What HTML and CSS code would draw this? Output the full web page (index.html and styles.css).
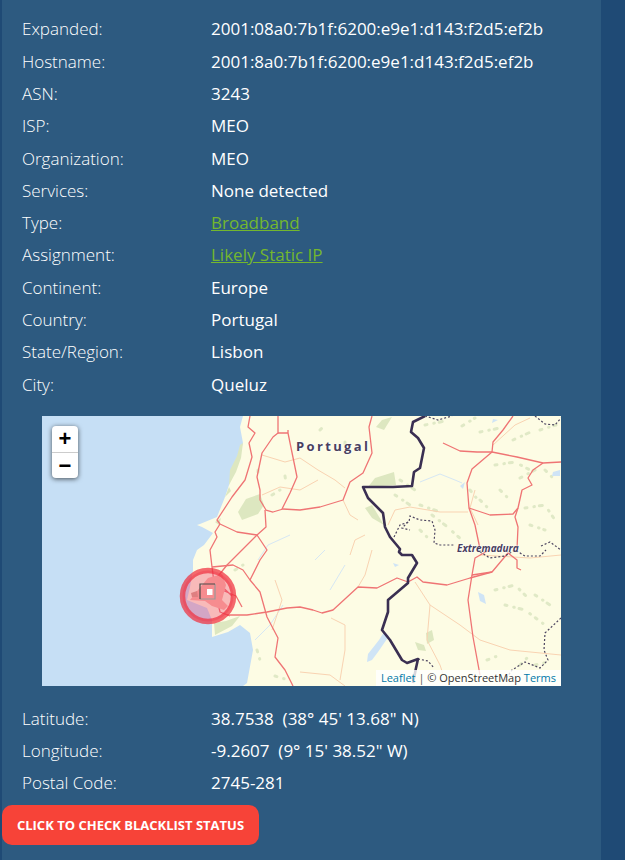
FILE: index.html
```html
<!DOCTYPE html>
<html lang="en">
<head>
<meta charset="utf-8">
<title>IP details</title>
<link rel="stylesheet" href="styles.css">
</head>
<body>
<main class="panel">
  <dl class="rows rows-top">
    <div class="row"><dt>Expanded:</dt><dd>2001:08a0:7b1f:6200:e9e1:d143:f2d5:ef2b</dd></div>
    <div class="row"><dt>Hostname:</dt><dd>2001:8a0:7b1f:6200:e9e1:d143:f2d5:ef2b</dd></div>
    <div class="row"><dt>ASN:</dt><dd>3243</dd></div>
    <div class="row"><dt>ISP:</dt><dd>MEO</dd></div>
    <div class="row"><dt>Organization:</dt><dd>MEO</dd></div>
    <div class="row"><dt>Services:</dt><dd>None detected</dd></div>
    <div class="row"><dt>Type:</dt><dd><a class="green" href="#">Broadband</a></dd></div>
    <div class="row"><dt>Assignment:</dt><dd><a class="green" href="#">Likely Static IP</a></dd></div>
    <div class="row"><dt>Continent:</dt><dd>Europe</dd></div>
    <div class="row"><dt>Country:</dt><dd>Portugal</dd></div>
    <div class="row"><dt>State/Region:</dt><dd>Lisbon</dd></div>
    <div class="row"><dt>City:</dt><dd>Queluz</dd></div>
  </dl>

  <div class="map">
    <svg class="map-art" viewBox="42 416 519 270" width="519" height="270" aria-hidden="true">
      <rect class="water" x="42" y="416" width="519" height="270"/>
      <path class="land" d="M243 416L240 427L243 443L235 467L225 497L217 517L200 524L197 525L202 527L213 533L204 545L197 550L193 560L193 570L190 587L187 600L207 608L212 620L212 637L228 632L240 625L250 633L253 650L247 683L243 686L561 686L561 416Z"/>
      <g class="green-patch">
        <path d="M240 445L243 443L241 458L236 472L229 485L230 470L237 456Z"/>
        <path d="M229 487L225 497L231 491Z"/>
        <path d="M238 512L246 499L260 494L264 505L258 514L242 520Z"/>
        <path d="M215 522L221 518L219 525Z"/>
        <path d="M214 623L226 621L240 616L232 626L215 635Z"/>
        <path d="M376 427L382 420L392 417L384 430Z"/>
        <path d="M375 478L394 472L396 485L368 487Z"/>
        <path d="M365 508L372 505L384 525L372 518Z"/>
        <path d="M426 633L432 630L434 640L427 644Z"/>
        <path d="M415 642L424 645L426 651L418 650Z"/>
      </g>
      <g class="blotch">
        <path d="M425 425L450 420M462 426L475 418M480 432L500 428M513 440L535 430M540 430L556 425"/>
        <path d="M495 465L515 462L530 470M520 478L535 470M545 470L555 480"/>
        <path d="M432 515L445 525L462 540M420 530L430 540M395 495L410 505M470 490L478 500"/>
        <path d="M400 480L415 490M420 505L440 512M480 500L490 510"/>
        <path d="M525 508L545 505L555 520M530 525L545 530M500 490L510 500"/>
        <path d="M495 590L515 585L530 600M505 605L525 610L545 625M535 595L550 605"/>
        <path d="M487 660L500 655M520 665L530 655M535 665L548 662"/>
        <path d="M257 650L260 660M275 676L288 680M272 495L280 490M258 470L258 472M285 476L286 482M235 570L243 565"/>
        <path d="M345 442L345 444M320 430L322 428M380 645L378 650"/>
      </g>
      <g class="lake">
        <path d="M379 640L384 632L389 636L378 652L372 660L367 662L368 654Z"/>
        <path d="M478 592L484 595L486 604L480 601Z"/>
        <path d="M460 486L465 482L463 489Z"/>
        <path d="M553 472L560 470L560 476L552 476Z"/>
        <path d="M393 563L399 565L395 567Z"/>
        <path d="M493 419L498 420L492 423Z"/>
      </g>
      <g class="river">
        <path d="M420 482L440 474L455 480L462 483"/>
        <path d="M258 560L268 545L290 535"/>
        <path d="M330 590L345 565M315 560L325 550"/>
        <path d="M255 640L270 625L283 605"/>
      </g>
      <g class="minor">
        <path d="M262 455L285 462L300 458L318 470L335 480L345 488"/>
        <path d="M262 495L280 487L300 490L318 480"/>
        <path d="M343 500L350 515L358 520"/>
        <path d="M395 510L410 507L440 512L468 512"/>
        <path d="M395 510L388 525"/>
        <path d="M365 535L355 540L350 555"/>
        <path d="M372 550L365 575L358 587"/>
        <path d="M331 618L345 625L345 650L340 680"/>
        <path d="M415 582L430 605L460 625L480 640L510 650L561 655"/>
        <path d="M430 605L427 640L440 665L445 680"/>
        <path d="M300 672L330 675L345 686"/>
        <path d="M475 490L470 508L478 525"/>
        <path d="M275 580L282 600L272 630"/>
        <path d="M480 555L530 558L561 555"/>
        <path d="M493 445L515 425L530 418"/>
      </g>
      <g class="road">
        <path d="M372 416L369 427L372 453L363 473L350 482L343 500L320 507L300 510L283 509L273 512L266 510L260 500L260 490L257 477L262 453L273 437L278 433L278 416"/>
        <path d="M288 430L288 433L278 433M288 433L297 477L290 493L282 509"/>
        <path d="M250 416L248 427L255 433L249 443L252 457L245 480L232 497L217 520L220 524L237 532L257 535L242 550L227 565L215 580"/>
        <path d="M265 510L266 527L257 535L267 550L260 560L250 580"/>
        <path d="M220 524L215 532L217 537L210 550L212 567L215 590L220 612L230 616"/>
        <path d="M212 567L233 565L243 570L250 580L260 592L267 617L278 638L275 657L285 670L293 686"/>
        <path d="M227 615L247 615L267 612L287 608L300 607L313 610L322 613L333 610L358 587L377 588L397 578L408 582L417 577L423 582L447 585L470 578L492 572L508 553L517 560L517 568L521 570"/>
        <path d="M492 572L472 575L475 558L489 550"/>
        <path d="M472 575L468 600L473 637L480 675"/>
        <path d="M443 443L460 451L477 452L492 452L493 442L503 430L513 416"/>
        <path d="M492 452L517 457L543 463L561 462"/>
        <path d="M543 463L533 470L528 478L532 485L522 490L518 508L515 517L518 527L517 549"/>
        <path d="M492 452L472 469L467 483L469 508L475 525L480 549"/>
        <path d="M469 508L490 515L513 514L518 508"/>
        <path d="M212 594L222 590L236 596L242 607M215 580L232 596"/>
      </g>
      <g class="dots">
        <path d="M425 416L438 420L452 416"/>
        <path d="M535 416L545 424L555 425L561 418"/>
        <path d="M394 537L400 525L409 522L410 516L420 520L432 521L435 530L434 543L440 545L455 545"/>
        <path d="M408 522L402 528L410 530"/>
        <path d="M541 546L550 542L561 550"/>
        <path d="M480 552L490 558L505 556L515 550L525 556L540 556L546 550"/>
        <path d="M561 618L545 633L544 650L548 660L540 668L525 662L512 670L505 680"/>
        <path d="M418 659L428 661L434 668"/>
      </g>
      <path class="border" d="M425 416L413 422L411 432L418 438L424 448L420 468L414 472L412 486L393 487L363 487L368 498L383 513L385 527L390 537L400 549L399 552L402 555L412 555L417 563L408 578L408 583L388 600L388 612L382 630L390 640L402 660L407 663L418 659L416 668L413 683"/>
      <path class="urban" d="M190 600L198 590L208 578L222 574L226 585L222 600L228 606L224 610L212 606L205 601Z"/>
      <path class="urban-dark" d="M191 593L197 591L198 597L192 597Z"/>
      <circle class="marker" cx="208" cy="596" r="25.5"/>
      <path class="square-light" d="M215 584V599H200"/>
      <path class="square-dark" d="M200 599V584H215"/>
      <rect class="square-core" x="207" y="589" width="5.5" height="6"/>
    </svg>
    <div class="label label-country">Portugal</div>
    <div class="label label-region">Extremadura</div>
    <div class="zoom">
      <a class="zoom-btn" href="#">+</a>
      <a class="zoom-btn" href="#">−</a>
    </div>
    <div class="attribution"><a href="#">Leaflet</a> <span class="sep">|</span> © OpenStreetMap <a href="#">Terms</a></div>
  </div>

  <dl class="rows rows-bottom">
    <div class="row"><dt>Latitude:</dt><dd>38.7538&nbsp; (38° 45' 13.68" N)</dd></div>
    <div class="row"><dt>Longitude:</dt><dd>-9.2607&nbsp; (9° 15' 38.52" W)</dd></div>
    <div class="row"><dt>Postal Code:</dt><dd>2745-281</dd></div>
  </dl>

  <a class="cta" href="#">Click to check blacklist status</a>
</main>
</body>
</html>
```

FILE: styles.css
```css
* { box-sizing: border-box; }

html, body {
  margin: 0;
  height: 860px;
  overflow: hidden;
}

body {
  background: #1f4a75;
  font-family: "Open Sans", sans-serif;
  font-size: 17px;
  color: #fff;
}

.panel {
  width: 599px;
  height: 860px;
  margin-left: 2px;
  background: #2d5a80;
}

.rows { margin: 0; padding-left: 20px; }
.rows-top { padding-top: 13.33px; }
.rows-bottom { margin-top: 16.8px; }

.row {
  display: grid;
  grid-template-columns: 189px 1fr;
  height: 32.3px;
  line-height: 32.3px;
}

dt { font-weight: 300; }
dd { margin: 0; font-weight: 400; }

.green { color: #74b72e; text-decoration: underline; }

.map {
  position: relative;
  width: 519px;
  height: 270px;
  margin: 15.07px 0 0 40px;
  overflow: hidden;
}

.map-art { display: block; filter: blur(0.35px); }

.water { fill: #c6dff5; }
.land { fill: #fdfce4; }
.green-patch path { fill: #dde7c0; }
.blotch path { fill: none; stroke: #e0e9c6; stroke-width: 3; stroke-linecap: round; stroke-dasharray: 2 7 0.5 5 3 9 1 6; }
.lake path { fill: #cfe4f6; }
.river path { fill: none; stroke: #d6e7f4; stroke-width: 1; }
.minor path { fill: none; stroke: #f9d3b2; stroke-width: 1; }
.road path { fill: none; stroke: #ef7474; stroke-width: 1.3; stroke-linejoin: round; }
.dots path { fill: none; stroke: #4d4560; stroke-width: 1.2; stroke-dasharray: 2 2; }
.border { fill: none; stroke: #3a2f52; stroke-width: 2.6; stroke-linejoin: round; }
.urban { fill: #f9b8a6; }
.urban-dark { fill: #d6a58f; }
.marker { fill: #ee3060; fill-opacity: 0.32; stroke: #f0303f; stroke-opacity: 0.72; stroke-width: 5.5; }
.square-dark { fill: none; stroke: #4a4a4a; stroke-width: 1.2; }
.square-light { fill: none; stroke: #9a9a9a; stroke-width: 1.2; }
.square-core { fill: #fff; }

.label {
  position: absolute;
  font-weight: 700;
  color: #4a3f60;
  text-shadow: 0 0 2px #fff, 0 0 2px #fff;
  white-space: nowrap;
}

.label-country {
  left: 254px;
  top: 21px;
  font-size: 13px;
  line-height: 18px;
  letter-spacing: 2.35px;
}

.label-region {
  left: 415px;
  top: 125px;
  font-size: 10px;
  line-height: 14px;
  font-style: italic;
}

.zoom {
  position: absolute;
  left: 10px;
  top: 10px;
  width: 26px;
  border-radius: 4px;
  background: #fff;
  box-shadow: 0 1px 5px rgba(0, 0, 0, 0.65);
}

.zoom-btn {
  display: block;
  height: 26px;
  font-family: "Liberation Sans", sans-serif;
  font-size: 22px;
  font-weight: 700;
  line-height: 25px;
  text-align: center;
  color: #000;
  text-decoration: none;
}

.zoom-btn + .zoom-btn { border-top: 1px solid #ccc; }

.attribution {
  position: absolute;
  right: 0;
  bottom: 0;
  height: 16px;
  padding: 0 5px;
  font-size: 11px;
  line-height: 16px;
  color: #333;
  background: rgba(255, 255, 255, 0.8);
  white-space: nowrap;
}

.attribution a { color: #0078a8; text-decoration: none; }
.sep { color: #555; }

.cta {
  display: block;
  width: 257px;
  height: 40px;
  margin-top: 5.3px;
  border-radius: 10px;
  background: #f74338;
  font-size: 13px;
  font-weight: 700;
  line-height: 40px;
  text-align: center;
  text-transform: uppercase;
  text-decoration: none;
  color: #fff;
}
```
